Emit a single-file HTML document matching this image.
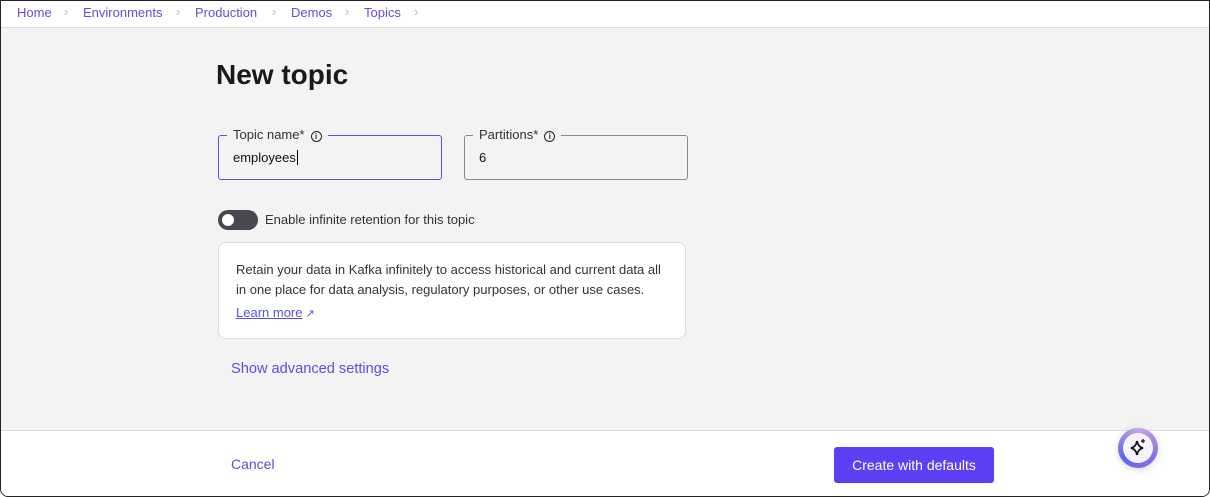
<!DOCTYPE html>
<html><head><style>
*{box-sizing:border-box;margin:0;padding:0}
body{width:1210px;height:497px;background:#fff;font-family:"Liberation Sans",sans-serif;position:relative;overflow:hidden}
.frame{position:absolute;inset:0;border:1px solid #222;border-radius:0 0 8px 8px;overflow:hidden;background:#f3f3f3}
.in{position:absolute;left:-1px;top:-1px;width:1210px;height:497px}
.bc{position:absolute;left:0;top:0;right:0;height:28px;background:#fff;border-bottom:1px solid #dcdcdc;font-size:13px;color:#5b4fe0}
.bc span{position:absolute;top:5px}
.bc i{position:absolute;top:4px;color:#bbb;font-style:normal;font-size:13px}
h1{position:absolute;left:216px;top:59px;font-size:28px;font-weight:bold;color:#1a1a1a}
.fld{position:absolute;height:45px;border:1px solid #8a8a8e;border-radius:3px}
.fld.a{border-color:#5b4fe0}
.lab{position:absolute;top:-8px;left:8px;background:#f3f3f3;padding:0 6px;font-size:13px;color:#333;line-height:14px}
.ic{display:inline-block;width:11px;height:11px;border:1.3px solid #222;border-radius:50%;font-size:8px;text-align:center;line-height:9px;font-weight:bold;margin-left:6px;vertical-align:0}
.val{position:absolute;left:14px;top:14px;font-size:13px;color:#111}
.tog{position:absolute;left:218px;top:210px;width:40px;height:20px;background:#4a4752;border-radius:10px}
.tog:after{content:"";position:absolute;left:4px;top:4px;width:12px;height:12px;border-radius:50%;background:#fff}
.card{position:absolute;left:218px;top:242px;width:468px;height:97px;background:#fff;border:1px solid #dcdbe2;border-radius:8px;font-size:13px;color:#333;line-height:20px;padding:17px 0 0 17px}
a{color:#5b4fe0}
.foot{position:absolute;left:0;right:0;top:430px;bottom:0;background:#fff;border-top:1px solid #dcdcdc}
.btn{position:absolute;left:834px;top:16px;width:160px;height:36px;background:#5b40f5;color:#fff;border-radius:3px;font-size:14px;text-align:center;line-height:36px}
.ai{position:absolute;left:1118px;top:428px;width:40px;height:40px;border-radius:50%;background:conic-gradient(#c6a4e6,#8a6ee8,#5b6ae8,#c6a4e6);box-shadow:0 2px 8px rgba(0,0,0,.15)}
.ai div{position:absolute;inset:5px;border-radius:50%;background:#f5f3fb}
</style></head><body><div class="frame"><div class="in">
<div class="bc">
<span style="left:17px">Home</span><i style="left:64px">›</i>
<span style="left:83px">Environments</span><i style="left:176px">›</i>
<span style="left:195px">Production</span><i style="left:272px">›</i>
<span style="left:291px">Demos</span><i style="left:345px">›</i>
<span style="left:364px">Topics</span><i style="left:414px">›</i>
</div>
<h1>New topic</h1>
<div class="fld a" style="left:218px;top:135px;width:224px"><div class="lab">Topic name*<span class="ic">i</span></div><div class="val">employees<span style="border-left:1px solid #000;margin-left:1px"></span></div></div>
<div class="fld" style="left:464px;top:135px;width:224px"><div class="lab">Partitions*<span class="ic">i</span></div><div class="val">6</div></div>
<div class="tog"></div>
<div style="position:absolute;left:265px;top:212px;font-size:13px;color:#333">Enable infinite retention for this topic</div>
<div class="card">Retain your data in Kafka infinitely to access historical and current data all<br>in one place for data analysis, regulatory purposes, or other use cases.<br><a style="font-size:13px;text-decoration:underline;line-height:26px">Learn more</a><span style="color:#5b4fe0;font-size:11px"> ↗</span></div>
<div style="position:absolute;left:231px;top:361px;font-size:14.6px;color:#5b4fe0">Show advanced settings</div>
<div class="foot">
<div style="position:absolute;left:231px;top:25px;font-size:14px;color:#5b4fe0">Cancel</div>
<div class="btn">Create with defaults</div>
</div>
<div class="ai"><div><svg width="30" height="30" viewBox="0 0 30 30"><path d="M14 8 Q15 14 20 15 Q15 16 14 22 Q13 16 8 15 Q13 14 14 8Z" fill="none" stroke="#111" stroke-width="1.8"/><path d="M20 6v4M18 8h4" stroke="#111" stroke-width="1.3"/></svg></div></div>
</div></div></body></html>
